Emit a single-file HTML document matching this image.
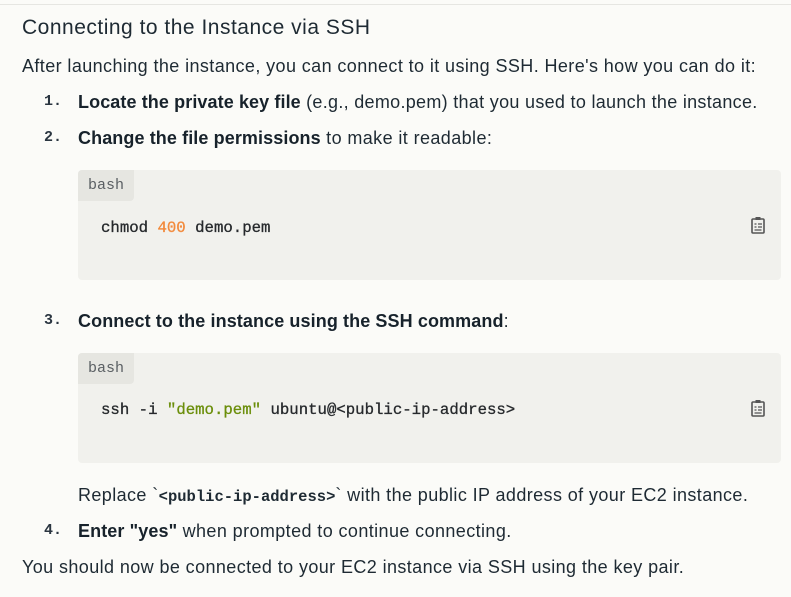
<!DOCTYPE html>
<html><head><style>
html,body{margin:0;padding:0;width:791px;height:597px;overflow:hidden;background:#fbfbf8;}
body{font-family:"Liberation Sans",sans-serif;color:#1e2a33;position:relative;}
.t{position:absolute;white-space:nowrap;line-height:20px;font-size:18px;letter-spacing:0.4px;}
.top{position:absolute;left:0;top:4px;width:791px;height:1px;background:#e6e6e2;}
.num{position:absolute;font-family:"Liberation Mono",monospace;font-weight:bold;font-size:15px;color:#2a3540;line-height:20px;}
b{font-weight:bold;color:#17222b;letter-spacing:0.1px;}
.code{position:absolute;left:78px;width:703px;height:110px;background:#f1f1ed;border-radius:4px;}
.lbl{position:absolute;left:0;top:0;width:56px;height:31px;background:#e6e6e1;border-radius:4px 0 4px 0;font-family:"Liberation Mono",monospace;font-size:15px;color:#5a5f63;line-height:31px;text-align:center;}
.c{position:absolute;left:23px;top:48px;font-family:"Liberation Mono",monospace;font-size:15.7px;color:#26292c;white-space:nowrap;line-height:20px;-webkit-text-stroke:0.3px #26292c;}
.ic{position:absolute;right:16px;top:46px;}
</style></head><body>
<div class="top"></div>
<div class="t" style="left:22px;top:18px;font-size:21px;letter-spacing:0.5px;">Connecting to the Instance via SSH</div>
<div class="t" style="left:22px;top:56px;">After launching the instance, you can connect to it using SSH. Here's how you can do it:</div>
<div class="num" style="left:44px;top:92px;">1.</div>
<div class="t" style="left:78px;top:92px;letter-spacing:0.3px;"><b>Locate the private key file</b> (e.g., demo.pem) that you used to launch the instance.</div>
<div class="num" style="left:44px;top:128px;">2.</div>
<div class="t" style="left:78px;top:128px;"><b>Change the file permissions</b> to make it readable:</div>
<div class="code" style="top:170px;"><div class="lbl">bash</div><div class="c">chmod <span style="color:#f28a3c;-webkit-text-stroke-color:#f28a3c">400</span> demo.pem</div>
<svg class="ic" width="14" height="18" viewBox="0 0 14 18"><rect x="1" y="3" width="12" height="14" rx="1" fill="none" stroke="#555" stroke-width="1.6"/><rect x="4.5" y="1" width="5" height="3" fill="#555"/><path d="M3.5 8h2M7 8h4M3.5 11h2M7 11h4M3.5 14h7" stroke="#555" stroke-width="1.2"/></svg></div>
<div class="num" style="left:44px;top:311px;">3.</div>
<div class="t" style="left:78px;top:311px;"><b>Connect to the instance using the SSH command</b>:</div>
<div class="code" style="top:353px;"><div class="lbl">bash</div><div class="c" style="top:47px;">ssh -i <span style="color:#6b8e0a;-webkit-text-stroke-color:#6b8e0a">"demo.pem"</span> ubuntu@&lt;public-ip-address&gt;</div>
<svg class="ic" width="14" height="18" viewBox="0 0 14 18"><rect x="1" y="3" width="12" height="14" rx="1" fill="none" stroke="#555" stroke-width="1.6"/><rect x="4.5" y="1" width="5" height="3" fill="#555"/><path d="M3.5 8h2M7 8h4M3.5 11h2M7 11h4M3.5 14h7" stroke="#555" stroke-width="1.2"/></svg></div>
<div class="t" style="left:78px;top:485px;">Replace `<span style="font-family:'Liberation Mono',monospace;font-weight:bold;font-size:15.5px;letter-spacing:0;">&lt;public-ip-address&gt;</span>` with the public IP address of your EC2 instance.</div>
<div class="num" style="left:44px;top:521px;">4.</div>
<div class="t" style="left:78px;top:521px;"><b>Enter "yes"</b> when prompted to continue connecting.</div>
<div class="t" style="left:22px;top:557px;">You should now be connected to your EC2 instance via SSH using the key pair.</div>
</body></html>
